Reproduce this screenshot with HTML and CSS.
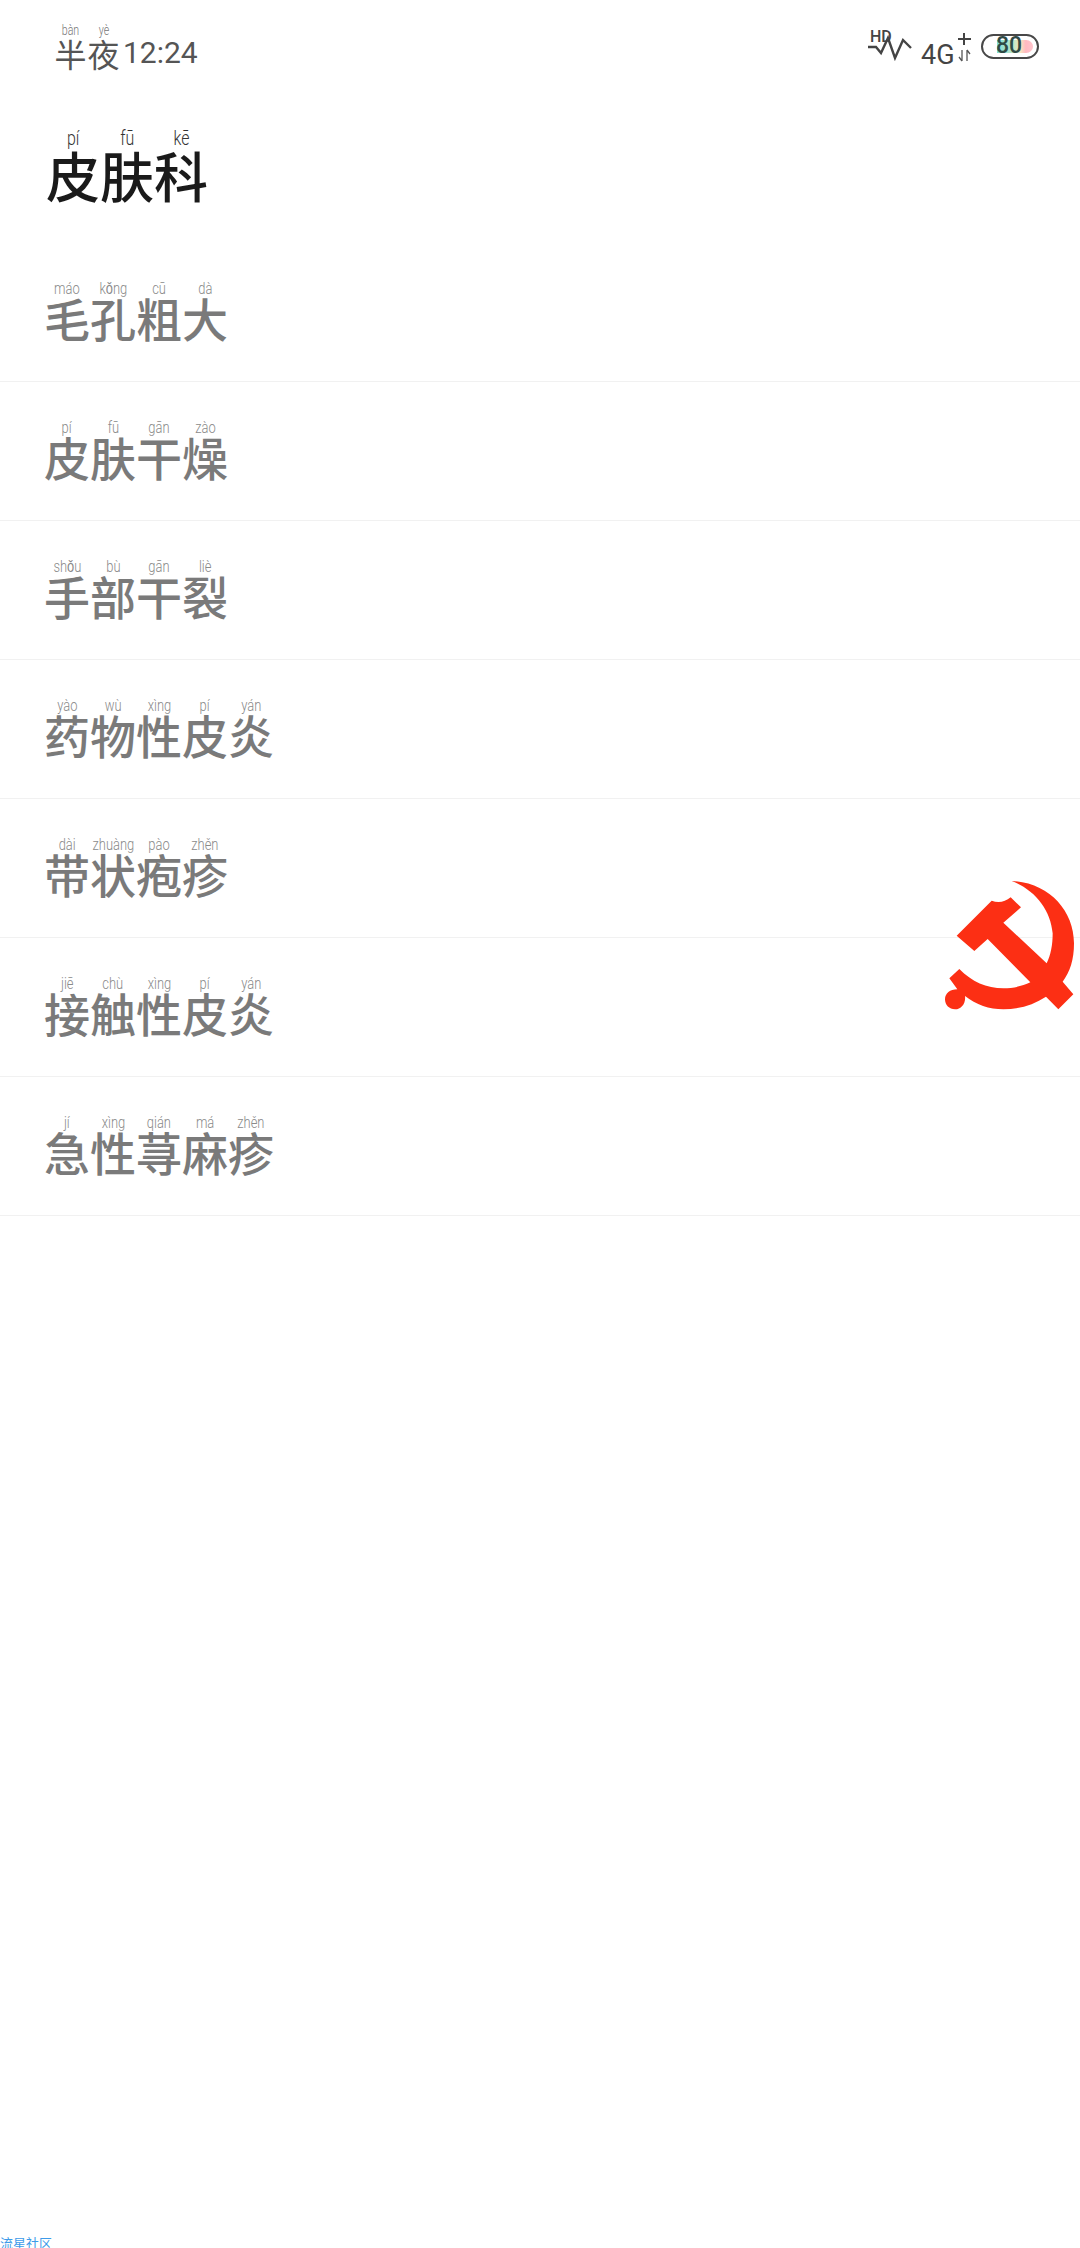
FILE: index.html
```html
<!DOCTYPE html>
<html lang="zh-CN">
<head>
    <meta charset="UTF-8">
    <meta name="viewport" content="width=device-width, initial-scale=1.0">
    <title>皮肤科</title>
    <link rel="stylesheet" href="styles.css">
</head>
<body>
    <div class="page">
        <div class="status-bar">
            <div class="clock">
                <span class="zi"><span class="py">bàn</span><span class="hz">半</span></span><span class="zi"><span class="py">yè</span><span class="hz">夜</span></span>
                <span class="time">12:24</span>
            </div>
            <svg class="status-icons" viewBox="0 0 240 70" width="240" height="70">
                <defs>
                    <linearGradient id="batt" x1="0" x2="1" y1="0" y2="0">
                        <stop offset="0" stop-color="#7fdcd6"/>
                        <stop offset="0.45" stop-color="#bfe6c8"/>
                        <stop offset="0.65" stop-color="#f8e6c0"/>
                        <stop offset="0.8" stop-color="#ffb9c0"/>
                        <stop offset="1" stop-color="#ffc4cc"/>
                    </linearGradient>
                </defs>
                <text class="ic-hd" x="30" y="32">HD</text>
                <polyline class="ic-wave" points="28,37 36,37 41,43 48,28 55,48 63,30 71,38"/>
                <text class="ic-4g" x="81" y="54">4G</text>
                <path class="ic-line" d="M124 23V35M118 29H131"/>
                <path class="ic-thin" d="M122 40V51M119 47L122 51M127 51V40M127 40L130 44"/>
                <path d="M157 30H186C190 30 193 33 193 36.500C193 40 190 43 186 43H157Z" fill="url(#batt)"/>
                <rect class="ic-batt" x="142" y="25" width="56" height="23" rx="11.500"/>
                <text class="ic-pct" x="169" y="43">80</text>
            </svg>
        </div>

        <h1 class="heading">
            <span class="zi"><span class="py">pí</span><span class="hz">皮</span></span><span class="zi"><span class="py">fū</span><span class="hz">肤</span></span><span class="zi"><span class="py">kē</span><span class="hz">科</span></span>
        </h1>

        <div class="list">
            <div class="row">
                <span class="zi"><span class="py">máo</span><span class="hz">毛</span></span><span class="zi"><span class="py">kǒng</span><span class="hz">孔</span></span><span class="zi"><span class="py">cū</span><span class="hz">粗</span></span><span class="zi"><span class="py">dà</span><span class="hz">大</span></span>
            </div>
            <div class="row">
                <span class="zi"><span class="py">pí</span><span class="hz">皮</span></span><span class="zi"><span class="py">fū</span><span class="hz">肤</span></span><span class="zi"><span class="py">gān</span><span class="hz">干</span></span><span class="zi"><span class="py">zào</span><span class="hz">燥</span></span>
            </div>
            <div class="row">
                <span class="zi"><span class="py">shǒu</span><span class="hz">手</span></span><span class="zi"><span class="py">bù</span><span class="hz">部</span></span><span class="zi"><span class="py">gān</span><span class="hz">干</span></span><span class="zi"><span class="py">liè</span><span class="hz">裂</span></span>
            </div>
            <div class="row">
                <span class="zi"><span class="py">yào</span><span class="hz">药</span></span><span class="zi"><span class="py">wù</span><span class="hz">物</span></span><span class="zi"><span class="py">xìng</span><span class="hz">性</span></span><span class="zi"><span class="py">pí</span><span class="hz">皮</span></span><span class="zi"><span class="py">yán</span><span class="hz">炎</span></span>
            </div>
            <div class="row">
                <span class="zi"><span class="py">dài</span><span class="hz">带</span></span><span class="zi"><span class="py">zhuàng</span><span class="hz">状</span></span><span class="zi"><span class="py">pào</span><span class="hz">疱</span></span><span class="zi"><span class="py">zhěn</span><span class="hz">疹</span></span>
            </div>
            <div class="row">
                <span class="zi"><span class="py">jiē</span><span class="hz">接</span></span><span class="zi"><span class="py">chù</span><span class="hz">触</span></span><span class="zi"><span class="py">xìng</span><span class="hz">性</span></span><span class="zi"><span class="py">pí</span><span class="hz">皮</span></span><span class="zi"><span class="py">yán</span><span class="hz">炎</span></span>
            </div>
            <div class="row">
                <span class="zi"><span class="py">jí</span><span class="hz">急</span></span><span class="zi"><span class="py">xìng</span><span class="hz">性</span></span><span class="zi"><span class="py">qián</span><span class="hz">荨</span></span><span class="zi"><span class="py">má</span><span class="hz">麻</span></span><span class="zi"><span class="py">zhěn</span><span class="hz">疹</span></span>
            </div>
        </div>

        <!-- floating emblem, coords are the 3x crop -->
        <svg class="emblem" viewBox="0 0 480 480" width="160" height="160">
            <path d="M275 63C385 68 462 150 462 250C462 300 450 335 428 365L460 403L415 448L378 410C340 435 295 448 250 448C208 448 168 434 135 408C138 430 124 448 105 448C88 448 75 435 75 418C75 400 90 388 112 388L88 355L118 327C155 365 200 385 250 385C280 385 308 378 331 367L203 237L163 273L110 227L215 122C235 130 255 126 272 112L303 142L250 188L380 310C392 285 398 255 398 220C392 150 345 90 275 63Z"/>
        </svg>

        <div class="footer-link">流星社区</div>
    </div>
</body>
</html>
```

FILE: styles.css
```css
html, body {
    margin: 0;
    padding: 0;
    background: #fff;
}

.page {
    position: relative;
    height: 2248px;
    overflow: hidden;
    font-family: "Noto Sans CJK SC", "Noto Sans", sans-serif;
}

/* one hanzi with its pinyin above it */
.zi {
    display: inline-flex;
    flex-direction: column;
    align-items: center;
}

.py {
    font-family: Roboto, sans-serif;
    font-weight: 300;
    white-space: nowrap;
    transform: scaleX(0.76);
}

.hz {
    display: block;
    font-weight: 500;
}

.status-bar {
    height: 90px;
    display: flex;
    justify-content: space-between;
    align-items: flex-start;
}

.clock {
    display: flex;
    align-items: flex-end;
    margin: 24px 0 0 54px;
    color: #555;
}

.clock .zi {
    width: 33px;
}

.clock .py {
    font-size: 14px;
    line-height: 13px;
    color: #777;
}

.clock .hz {
    font-size: 32px;
    line-height: 32px;
    font-weight: 400;
}

.time {
    font-family: Roboto, sans-serif;
    font-size: 30px;
    line-height: 32px;
    margin-left: 3px;
}

.status-icons {
    margin-top: 10px;
}

.ic-hd {
    font: 500 16px Roboto, sans-serif;
    fill: #444;
}

.ic-4g {
    font: 27px Roboto, sans-serif;
    fill: #444;
}

.ic-pct {
    font: 500 23px Roboto, sans-serif;
    fill: #2f4a45;
    text-anchor: middle;
}

.ic-line {
    fill: none;
    stroke: #444;
    stroke-width: 2;
}

.ic-wave {
    fill: none;
    stroke: #444;
    stroke-width: 2.400;
}

.ic-thin {
    fill: none;
    stroke: #555;
    stroke-width: 1.300;
}

.ic-batt {
    fill: none;
    stroke: #484848;
    stroke-width: 2;
}

.heading {
    height: 153px;
    margin: 0;
    padding: 18px 0 0 46px;
    box-sizing: border-box;
    font-weight: 400;
    color: #1a1a1a;
}

.heading .zi {
    width: 54px;
}

.heading .py {
    font-size: 21px;
    line-height: 20px;
    color: #333;
}

.heading .hz {
    font-size: 54px;
    line-height: 54px;
}

.row {
    height: 139px;
    padding: 32px 0 0 44px;
    box-sizing: border-box;
    border-bottom: 1px solid #f1f1f1;
    color: #7a7a7a;
}

.row .zi {
    width: 46px;
}

.row .py {
    font-size: 17px;
    line-height: 16px;
    color: #8a8a8a;
}

.row .hz {
    font-size: 46px;
    line-height: 43px;
}

.emblem {
    position: absolute;
    left: 920px;
    top: 860px;
    fill: #fc2f14;
}

.footer-link {
    position: absolute;
    left: 0;
    bottom: -3px;
    font-size: 13px;
    line-height: 16px;
    color: #3d9be9;
}
```
